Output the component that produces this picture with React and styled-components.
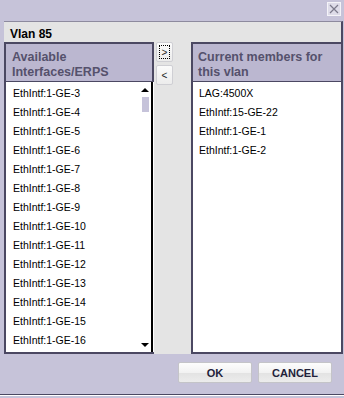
import React from "react";
import styled, { createGlobalStyle } from "styled-components";

const GlobalStyle = createGlobalStyle`
  html, body {
    margin: 0;
    padding: 0;
    background: #c6c3d9;
  }
  body {
    font-family: "Liberation Sans", Arial, sans-serif;
  }
`;

const Dialog = styled.div`
  width: 344px;
  height: 398px;
  background: #c6c3d9;
  display: flex;
  flex-direction: column;
  box-sizing: border-box;
`;

const TopBar = styled.div`
  height: 21px;
  display: flex;
  justify-content: flex-end;
  align-items: flex-start;
  padding: 2px 3px 0 0;
  box-sizing: border-box;
`;

const CloseBox = styled.div`
  width: 14px;
  height: 14px;
  background: #dedce9;
  border: 1px solid #f4f3f8;
  box-sizing: border-box;
  display: flex;
  align-items: center;
  justify-content: center;
`;

const Panel = styled.div`
  margin-left: 4px;
  width: 339px;
  height: 333px;
  background: #e4e4e4;
  border-top: 1px solid #8d8a9e;
  border-right: 2px solid #4b4862;
  box-sizing: border-box;
  display: flex;
  flex-direction: column;
`;

const Title = styled.div`
  height: 20px;
  padding: 5px 0 0 6px;
  box-sizing: border-box;
  font-size: 12px;
  line-height: 15px;
  font-weight: bold;
  color: #000;
`;

const Columns = styled.div`
  display: flex;
  align-items: flex-start;
  flex: 1;
`;

const ListBox = styled.div`
  width: 150px;
  height: 312px;
  display: flex;
  flex-direction: column;
  border-left: 2px solid #4b4862;
  border-bottom: 2px solid #4b4862;
  box-sizing: border-box;
  margin-left: ${(p) => p.$offset || 0}px;
`;

const ListHeader = styled.div`
  height: 40px;
  box-sizing: border-box;
  background: #bbb7d0;
  border-top: 2px solid #4b4862;
  border-right: ${(p) => (p.$edge ? "2px solid #4b4862" : "none")};
  border-bottom: 1px solid #4b4862;
  padding: 6px 0 0 ${(p) => p.$pad}px;
  font-size: 12.5px;
  line-height: 15px;
  font-weight: bold;
  color: #55516c;
`;

const ListBody = styled.div`
  flex: 1;
  background: #fff;
  display: flex;
  overflow: hidden;
`;

const Items = styled.div`
  flex: 1;
  display: flex;
  flex-direction: column;
  padding: 2px 0 0 ${(p) => p.$pad}px;
`;

const Item = styled.div`
  height: 19px;
  line-height: 19px;
  font-size: 10.5px;
  color: #000;
  white-space: nowrap;
`;

const ScrollTrack = styled.div`
  width: 12px;
  display: flex;
  flex-direction: column;
  align-items: center;
  border-right: 2px solid #000;
  margin-right: 1px;
`;

const UpArrow = styled.div`
  margin-top: 6px;
  width: 0;
  height: 0;
  border-left: 4px solid transparent;
  border-right: 4px solid transparent;
  border-bottom: 4px solid #000;
`;

const DownArrow = styled.div`
  margin-top: auto;
  margin-bottom: 5px;
  width: 0;
  height: 0;
  border-left: 4px solid transparent;
  border-right: 4px solid transparent;
  border-top: 4px solid #000;
`;

const Thumb = styled.div`
  margin-top: 5px;
  width: 7px;
  height: 15px;
  background: #c6c3da;
`;

const MoveColumn = styled.div`
  margin-left: 2px;
  width: 17px;
  display: flex;
  flex-direction: column;
  gap: 3px;
`;

const MoveButton = styled.button`
  width: 17px;
  height: 20px;
  padding: 0;
  box-sizing: border-box;
  border: 1px solid #cfcfd4;
  border-radius: 2px;
  background: linear-gradient(#fbfbfb, #ececec);
  font-family: "Liberation Sans", Arial, sans-serif;
  font-size: 10px;
  color: #222;
  display: flex;
  align-items: center;
  justify-content: center;
  position: relative;
  outline: none;

  &::after {
    content: "";
    display: ${(p) => (p.$focused ? "block" : "none")};
    position: absolute;
    inset: 2px;
    border: 1px dotted #000;
  }
`;

const Footer = styled.div`
  height: 40px;
  display: flex;
  justify-content: flex-end;
  align-items: flex-start;
  gap: 6px;
  padding: 8px 12px 0 0;
  box-sizing: border-box;
`;

const ActionButton = styled.button`
  width: 74px;
  height: 21px;
  box-sizing: border-box;
  border: 1px solid #c4c4c8;
  border-radius: 2px;
  background: linear-gradient(#fdfdfd 0%, #f2f2f2 50%, #e3e3e3 55%, #ececec 100%);
  font-family: "Liberation Sans", Arial, sans-serif;
  font-size: 11px;
  font-weight: bold;
  color: #22223a;
  padding: 0;
`;

const BottomEdge = styled.div`
  height: 2px;
  border-top: 1px solid #4b4862;
  border-bottom: 1px solid #ffffff;
  box-sizing: border-box;
`;

const available = [3, 4, 5, 6, 7, 8, 9, 10, 11, 12, 13, 14, 15, 16].map(
  (n) => `EthIntf:1-GE-${n}`
);
const members = ["LAG:4500X", "EthIntf:15-GE-22", "EthIntf:1-GE-1", "EthIntf:1-GE-2"];

export default function App() {
  return (
    <>
      <GlobalStyle />
      <Dialog>
        <TopBar>
          <CloseBox>
            <svg width="10" height="10" viewBox="0 0 10 10">
              <path d="M1 1 L9 9 M9 1 L1 9" stroke="#7c7a8c" strokeWidth="1.2" fill="none" />
            </svg>
          </CloseBox>
        </TopBar>
        <Panel>
          <Title>Vlan 85</Title>
          <Columns>
            <ListBox>
              <ListHeader $pad={6} $edge>
                Available
                <br />
                Interfaces/ERPS
              </ListHeader>
              <ListBody>
                <Items $pad={7}>
                  {available.map((name) => (
                    <Item key={name}>{name}</Item>
                  ))}
                </Items>
                <ScrollTrack>
                  <UpArrow />
                  <Thumb />
                  <DownArrow />
                </ScrollTrack>
              </ListBody>
            </ListBox>
            <MoveColumn>
              <MoveButton $focused>&gt;</MoveButton>
              <MoveButton>&lt;</MoveButton>
            </MoveColumn>
            <ListBox $offset={18}>
              <ListHeader $pad={5}>
                Current members for
                <br />
                this vlan
              </ListHeader>
              <ListBody>
                <Items $pad={6}>
                  {members.map((name) => (
                    <Item key={name}>{name}</Item>
                  ))}
                </Items>
              </ListBody>
            </ListBox>
          </Columns>
        </Panel>
        <Footer>
          <ActionButton>OK</ActionButton>
          <ActionButton>CANCEL</ActionButton>
        </Footer>
        <BottomEdge />
      </Dialog>
    </>
  );
}
